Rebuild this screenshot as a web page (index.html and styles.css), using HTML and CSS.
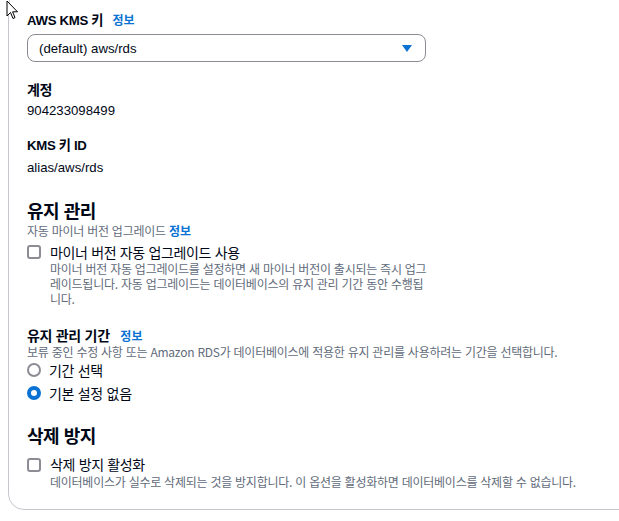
FILE: index.html
```html
<!DOCTYPE html>
<html lang="ko">
<head>
<meta charset="utf-8">
<link rel="stylesheet" href="styles.css">
</head>
<body>
<svg class="cursor" width="14" height="22" viewBox="0 0 14 22" aria-hidden="true">
  <path d="M1 1 L1 16 L4.5 12.5 L7 18.5 L9 17.6 L6.6 11.8 L11.5 11.8 Z" fill="#fff" stroke="#000" stroke-width="1" stroke-linejoin="miter"/>
</svg>
<div class="card">
  <div class="field">
    <div class="label mix">AWS KMS 키 <a class="info">정보</a></div>
    <div class="select">
      <span class="latin">(default) aws/rds</span>
      <svg class="caret" width="10" height="8" viewBox="0 0 10 8"><path d="M0 0 H10 L5 7 Z" fill="#0972d3"/></svg>
    </div>
  </div>
  <div class="field kv">
    <div class="label ko">계정</div>
    <div class="value latin">904233098499</div>
  </div>
  <div class="field kv">
    <div class="label mix">KMS 키 ID</div>
    <div class="value latin">alias/aws/rds</div>
  </div>

  <section class="section">
    <h2 class="heading">유지 관리</h2>
    <div class="sub">자동 마이너 버전 업그레이드 <a class="info">정보</a></div>
    <div class="check-row">
      <span class="checkbox"></span>
      <div class="check-text">
        <div class="check-label">마이너 버전 자동 업그레이드 사용</div>
        <div class="check-desc">마이너 버전 자동 업그레이드를 설정하면 새 마이너 버전이 출시되는 즉시 업그레이드됩니다. 자동 업그레이드는 데이터베이스의 유지 관리 기간 동안 수행됩니다.</div>
      </div>
    </div>
    <div class="window">
      <div class="label ko">유지 관리 기간 <a class="info">정보</a></div>
      <div class="sub">보류 중인 수정 사항 또는 Amazon RDS가 데이터베이스에 적용한 유지 관리를 사용하려는 기간을 선택합니다.</div>
      <div class="radios">
        <div class="radio-row"><span class="radio"></span><span class="radio-label">기간 선택</span></div>
        <div class="radio-row"><span class="radio on"></span><span class="radio-label">기본 설정 없음</span></div>
      </div>
    </div>
  </section>

  <section class="section last">
    <h2 class="heading">삭제 방지</h2>
    <div class="check-row first">
      <span class="checkbox"></span>
      <div class="check-text">
        <div class="check-label">삭제 방지 활성화</div>
        <div class="check-desc">데이터베이스가 실수로 삭제되는 것을 방지합니다. 이 옵션을 활성화하면 데이터베이스를 삭제할 수 없습니다.</div>
      </div>
    </div>
  </section>
</div>
</body>
</html>
```
FILE: styles.css
```css
html, body {
  margin: 0;
  padding: 0;
  background: #fff;
  overflow: hidden;
}
body {
  font-family: "Noto Sans CJK KR", "Noto Sans", sans-serif;
  color: #000716;
  font-size: 14px;
  width: 619px;
  height: 521px;
  position: relative;
}
.cursor {
  position: absolute;
  left: 6px;
  top: 0;
  z-index: 5;
}
.card {
  margin: -10px -40px 0 8px;
  border: 1px solid #c6c6cd;
  border-radius: 16px;
  padding: 20px 0 20px 18px;
}
.label {
  font-weight: 700;
  font-size: 14px;
  line-height: 18px;
}
.label.mix {
  font-family: "Liberation Sans", "Noto Sans CJK KR", sans-serif;
  font-size: 13.2px;
  letter-spacing: -0.3px;
}
.latin {
  font-family: "Liberation Sans", "Noto Sans CJK KR", sans-serif;
  font-size: 13.2px;
}
.ko { letter-spacing: -0.3px; }
.info {
  color: #0972d3;
  font-family: "Noto Sans CJK KR", sans-serif;
  font-weight: 700;
  font-size: 12px;
  margin-left: 6px;
  letter-spacing: 0;
}
.ko .info { margin-left: 7px; }
.sub .info { margin-left: 0; }
.select {
  box-sizing: border-box;
  margin-top: 4px;
  width: 399px;
  height: 28px;
  border: 1px solid #8c8c94;
  border-radius: 8px;
  display: flex;
  align-items: center;
  justify-content: space-between;
  padding: 0 13px 0 11px;
}
.caret { margin-top: 1px; }
.kv { margin-top: 18px; }
.kv + .kv { margin-top: 16px; }
.value {
  margin-top: 3px;
  line-height: 20px;
}
.section { margin-top: 20px; }
.heading {
  margin: 0;
  font-size: 18px;
  font-weight: 700;
  line-height: 24px;
  letter-spacing: -0.5px;
}
.sub {
  font-size: 12px;
  line-height: 16px;
  color: #5f6b7a;
  margin-top: 1px;
  letter-spacing: -0.25px;
}
.check-row {
  display: flex;
  gap: 9px;
  margin-top: 4px;
}
.check-row.first { margin-top: 8px; }
.checkbox {
  width: 10px;
  height: 10px;
  margin-top: 2px;
  border: 2px solid #8c8c94;
  border-radius: 3px;
  flex: none;
}
.check-label {
  line-height: 18px;
  letter-spacing: -0.35px;
}
.check-desc {
  font-size: 12px;
  line-height: 15px;
  color: #5f6b7a;
  width: 378px;
  letter-spacing: -0.25px;
}
.last .checkbox { margin-top: 3px; }
.last .check-desc { width: 560px; margin-top: 1px; }
.window { margin-top: 20px; }
.window .sub { margin-top: -1px; }
.radios { margin-top: 0; }
.radio-row {
  display: flex;
  align-items: center;
  gap: 8px;
  height: 20px;
}
.radio-label { letter-spacing: -0.3px; }
.radio-row + .radio-row { margin-top: 3px; }
.radio {
  width: 10px;
  height: 10px;
  border: 2px solid #8c8c94;
  border-radius: 50%;
  flex: none;
}
.radio.on {
  width: 6px;
  height: 6px;
  border: 4px solid #0972d3;
}
```
